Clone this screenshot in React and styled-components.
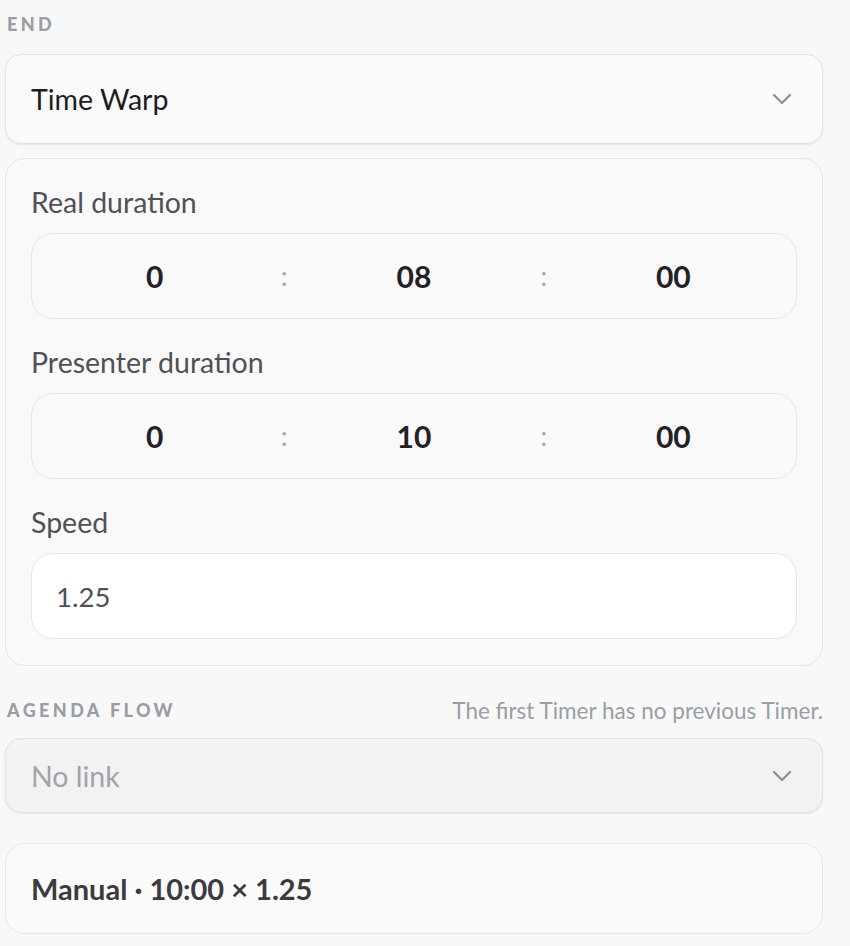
import styled, { createGlobalStyle } from "styled-components";

const GlobalStyle = createGlobalStyle`
	* { box-sizing: border-box; }
	body {
		margin: 0;
		background: #f7f9f9;
		font-family: "Lato", "Noto Sans", sans-serif;
		color: #1d1d1f;
	}
`;

const Page = styled.div`
	width: 818px;
	margin-left: 5px;
	padding-top: 12px;
	display: flex;
	flex-direction: column;
`;

const SectionHead = styled.div`
	display: flex;
	justify-content: space-between;
	align-items: center;
	height: 24px;
	padding-left: 2px;
	margin-top: ${(p) => p.$top || 0}px;
	margin-bottom: ${(p) => p.$gap || 18}px;
`;

const Caps = styled.span`
	font-size: 18px;
	font-weight: 900;
	letter-spacing: 3.4px;
	color: #9c9ca4;
	text-transform: uppercase;
`;

const Hint = styled.span`
	font-size: 22.5px;
	color: #9c9ca4;
`;

const Select = styled.div`
	display: flex;
	align-items: center;
	justify-content: space-between;
	height: ${(p) => p.$h}px;
	padding: 0 30px 0 25px;
	border: 1.5px solid #e3e3e5;
	border-radius: 16px;
	background: ${(p) => (p.$disabled ? "#f2f2f3" : "#fafafa")};
	box-shadow: 0 1px 2px rgba(0, 0, 0, 0.08);
	font-size: 28.5px;
	color: ${(p) => (p.$disabled ? "#a2a2aa" : "#1d1d1f")};
`;

const Chevron = () => (
	<svg width="20" height="12" viewBox="0 0 20 12" fill="none">
		<path
			d="M2 2l8 8 8-8"
			stroke="#8e8e98"
			strokeWidth="2.2"
			strokeLinecap="round"
			strokeLinejoin="round"
		/>
	</svg>
);

const Card = styled.div`
	margin-top: 14px;
	padding: 26px 25px;
	border: 1.5px solid #e6e6e8;
	border-radius: 20px;
	background: #f9f9f9;
	display: flex;
	flex-direction: column;
`;

const Field = styled.div`
	display: flex;
	flex-direction: column;
	gap: 14px;
	& + & {
		margin-top: 26px;
	}
`;

const Label = styled.div`
	font-size: 28.5px;
	line-height: 34px;
	color: #505058;
`;

const TimeBox = styled.div`
	display: grid;
	grid-template-columns: 1fr 20px 1fr 20px 1fr;
	align-items: center;
	height: 86px;
	padding: 0 3px;
	border: 1.5px solid #e6e6e8;
	border-radius: 22px;
	background: #f9f9f9;
`;

const Digit = styled.div`
	text-align: center;
	font-size: 30px;
	font-weight: 700;
	color: #222226;
`;

const Colon = styled.div`
	text-align: center;
	font-size: 26px;
	color: #a2a2aa;
`;

const Input = styled.div`
	display: flex;
	align-items: center;
	height: 86px;
	padding: 0 24px;
	border: 1.5px solid #e6e6e8;
	border-radius: 22px;
	background: #ffffff;
	font-size: 27.5px;
	color: #505058;
`;

const Summary = styled.div`
	display: flex;
	align-items: center;
	height: 91px;
	margin-top: 30px;
	padding: 0 25px;
	border: 1.5px solid #e8e8ea;
	border-radius: 20px;
	background: #fafafa;
	font-size: 29px;
	font-weight: 700;
	color: #3a3a40;
`;

const Duration = ({ label, parts }) => (
	<Field>
		<Label>{label}</Label>
		<TimeBox>
			<Digit>{parts[0]}</Digit>
			<Colon>:</Colon>
			<Digit>{parts[1]}</Digit>
			<Colon>:</Colon>
			<Digit>{parts[2]}</Digit>
		</TimeBox>
	</Field>
);

const App = () => {
	return (
		<>
			<GlobalStyle />
			<Page>
				<SectionHead>
					<Caps>End</Caps>
				</SectionHead>
				<Select $h={90}>
					<span>Time Warp</span>
					<Chevron />
				</Select>
				<Card>
					<Duration label="Real duration" parts={["0", "08", "00"]} />
					<Duration label="Presenter duration" parts={["0", "10", "00"]} />
					<Field>
						<Label>Speed</Label>
						<Input>1.25</Input>
					</Field>
				</Card>
				<SectionHead $top={32} $gap={16}>
					<Caps>Agenda flow</Caps>
					<Hint>The first Timer has no previous Timer.</Hint>
				</SectionHead>
				<Select $h={75} $disabled>
					<span>No link</span>
					<Chevron />
				</Select>
				<Summary>Manual · 10:00 × 1.25</Summary>
			</Page>
		</>
	);
};

export default App;
